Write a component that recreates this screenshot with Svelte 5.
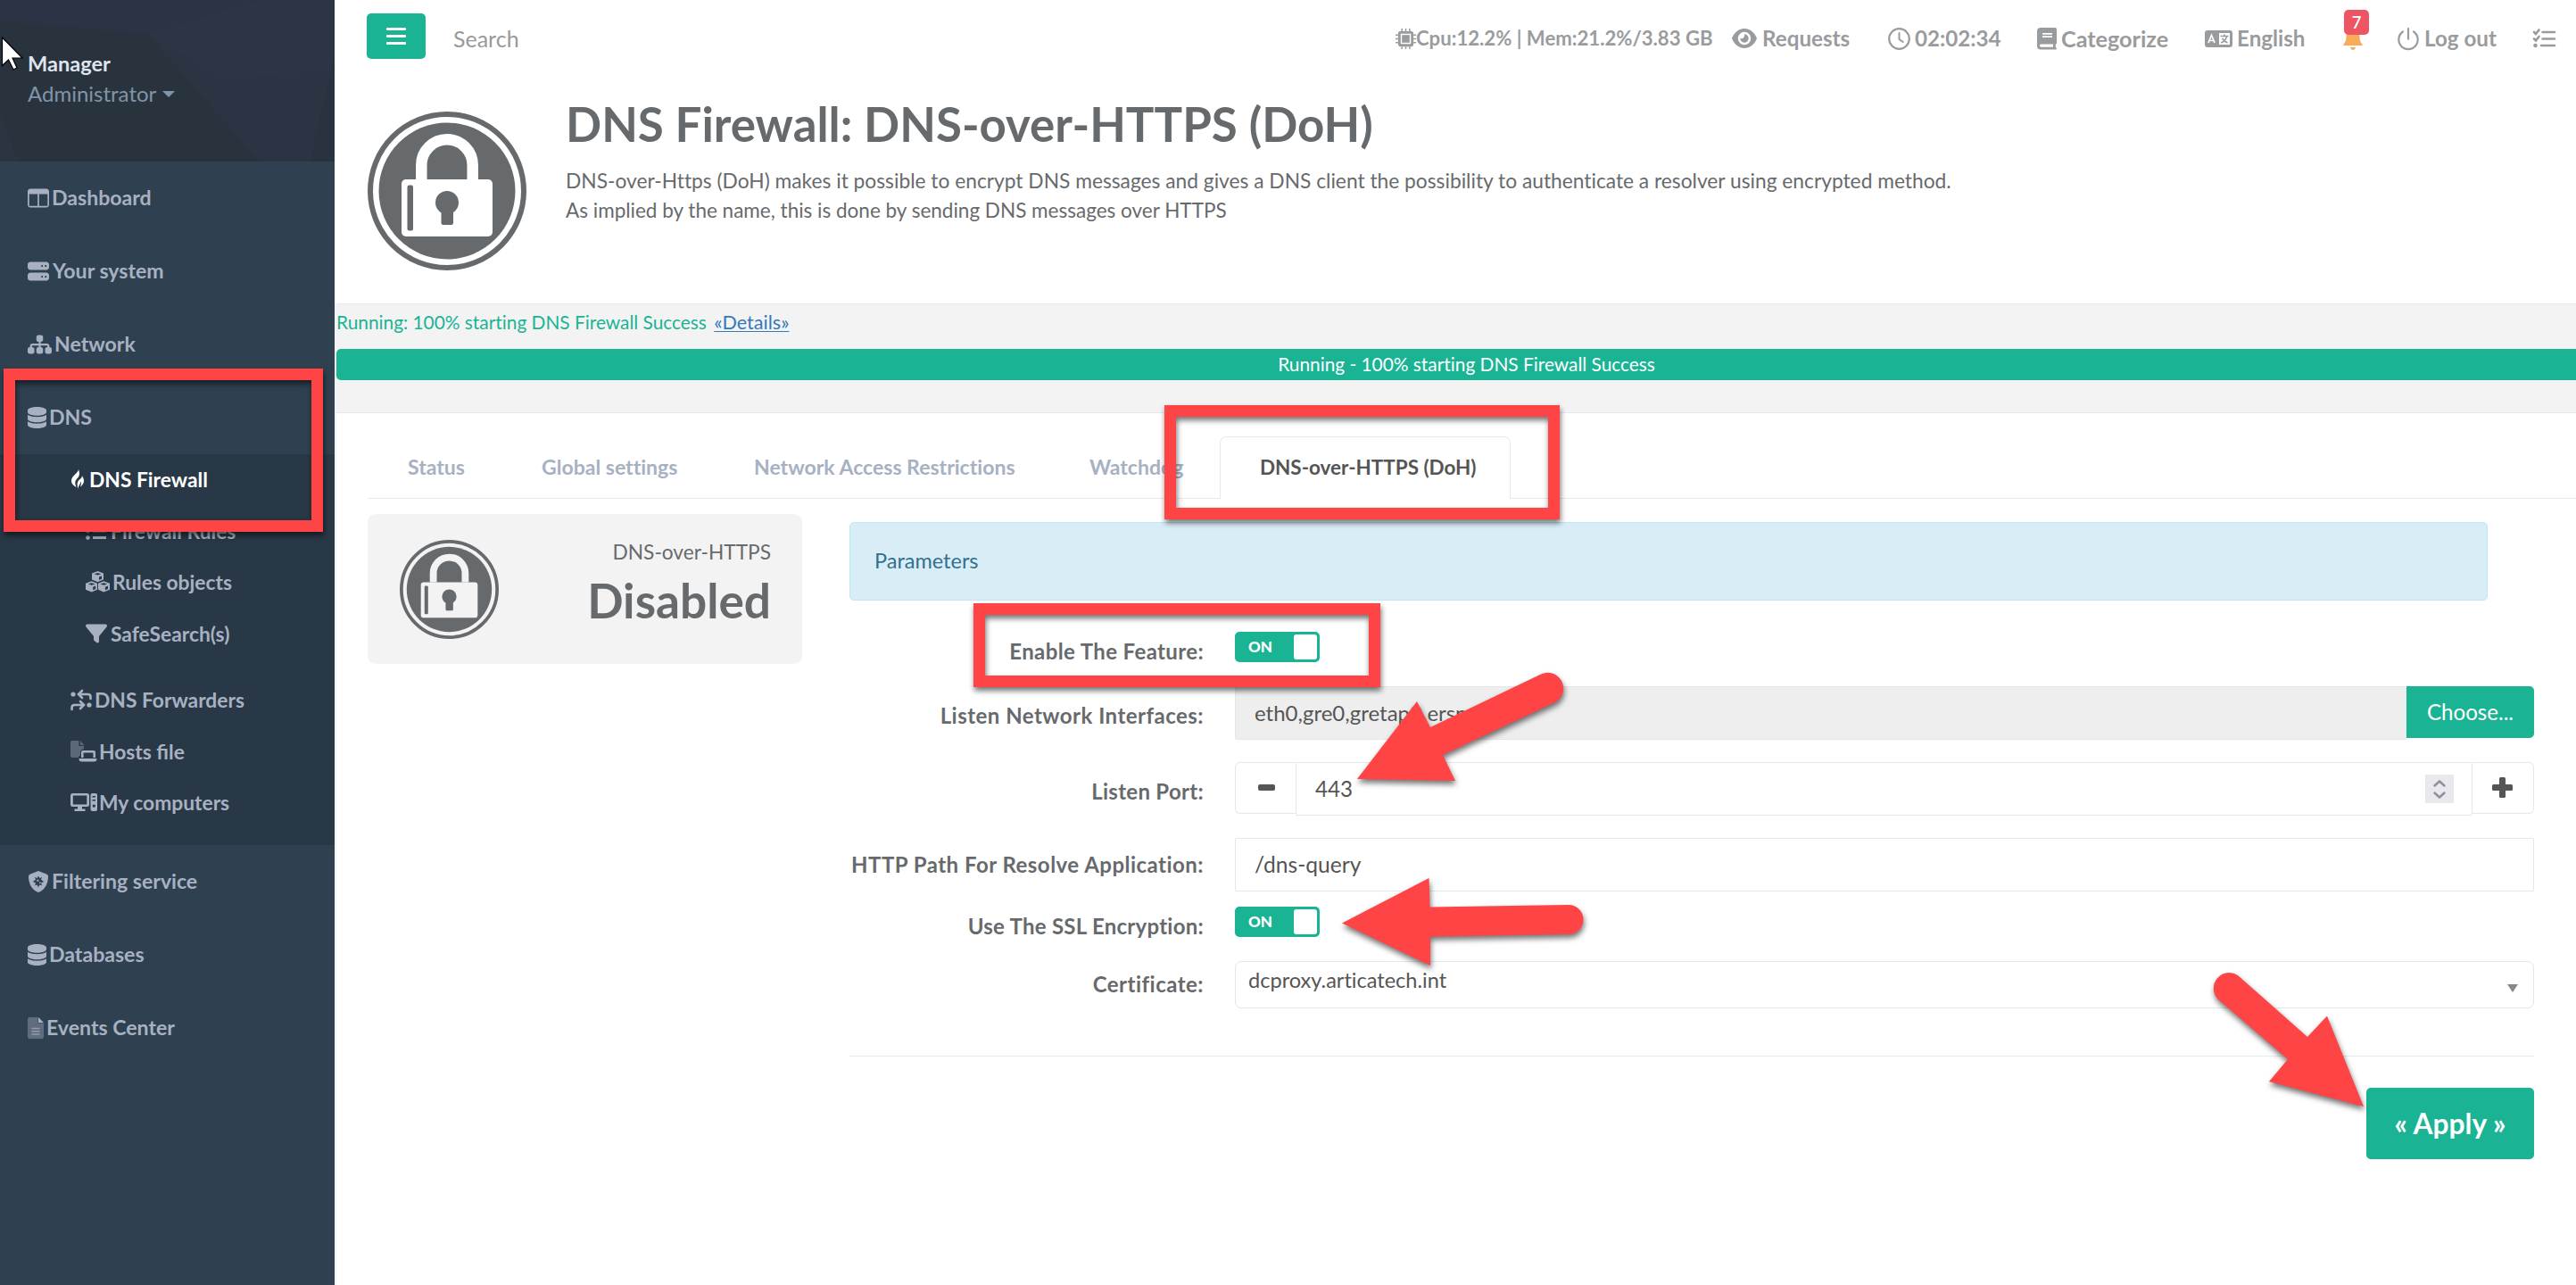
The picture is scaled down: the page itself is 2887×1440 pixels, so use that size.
<script>
  const top = [
    { icon: 'columns', label: 'Dashboard', w: 24, gap: 3 },
    { icon: 'server', label: 'Your system', w: 24, gap: 4 },
    { icon: 'sitemap', label: 'Network', w: 27, gap: 3 },
    { icon: 'database', label: 'DNS', w: 21, gap: 3 }
  ];
  const firewall = [
    { icon: 'list', label: 'Firewall Rules', w: 24, gap: 4 },
    { icon: 'cubes', label: 'Rules objects', w: 27, gap: 3 },
    { icon: 'filter', label: 'SafeSearch(s)', w: 24, gap: 4 }
  ];
  const dns = [
    { icon: 'swap', label: 'DNS Forwarders', w: 24, gap: 3 },
    { icon: 'hosts', label: 'Hosts file', w: 30, gap: 2, liga: true },
    { icon: 'computer', label: 'My computers', w: 30, gap: 2 }
  ];
  const bottom = [
    { icon: 'shield', label: 'Filtering service', w: 24, gap: 3 },
    { icon: 'database', label: 'Databases', w: 21, gap: 3 },
    { icon: 'file', label: 'Events Center', w: 18, gap: 3 }
  ];
  const tabs = ['Status', 'Global settings', 'Network Access Restrictions', 'Watchdog', 'DNS-over-HTTPS (DoH)'];
  const active = 4;
</script>

{#snippet icon(name)}
  {#if name === 'columns'}
    <svg viewBox="0 0 512 512" height="24"><path d="M0 96C0 60.7 28.7 32 64 32H448c35.3 0 64 28.7 64 64V416c0 35.3-28.7 64-64 64H64c-35.3 0-64-28.7-64-64V96zm36 64V436a16 16 0 0 0 16 8H238V160H36zm440 0H274V444H460a16 16 0 0 0 16-8V160z" /></svg>
  {:else if name === 'server'}
    <svg viewBox="0 0 512 512" height="24"><path fill-rule="evenodd" d="M64 32C28.7 32 0 60.7 0 96v64c0 35.3 28.7 64 64 64H448c35.3 0 64-28.7 64-64V96c0-35.3-28.7-64-64-64H64zm280 72a24 24 0 1 1 0 48 24 24 0 1 1 0-48zm64 24a24 24 0 1 1 48 0 24 24 0 1 1 -48 0zM64 288c-35.3 0-64 28.7-64 64v64c0 35.3 28.7 64 64 64H448c35.3 0 64-28.7 64-64V352c0-35.3-28.7-64-64-64H64zm280 72a24 24 0 1 1 0 48 24 24 0 1 1 0-48zm64 24a24 24 0 1 1 48 0 24 24 0 1 1 -48 0z" /></svg>
  {:else if name === 'sitemap'}
    <svg viewBox="0 0 576 512" height="24"><path d="M208 80c0-26.5 21.5-48 48-48h64c26.5 0 48 21.5 48 48v64c0 26.5-21.5 48-48 48h-8v40H464c30.9 0 56 25.1 56 56v32h8c26.5 0 48 21.5 48 48v64c0 26.5-21.5 48-48 48H464c-26.5 0-48-21.5-48-48V368c0-26.5 21.5-48 48-48h8V288c0-4.4-3.6-8-8-8H312v40h8c26.5 0 48 21.5 48 48v64c0 26.5-21.5 48-48 48H256c-26.5 0-48-21.5-48-48V368c0-26.5 21.5-48 48-48h8V280H112c-4.4 0-8 3.6-8 8v32h8c26.5 0 48 21.5 48 48v64c0 26.5-21.5 48-48 48H48c-26.5 0-48-21.5-48-48V368c0-26.5 21.5-48 48-48h8V288c0-30.9 25.1-56 56-56H264V192h-8c-26.5 0-48-21.5-48-48V80z" /></svg>
  {:else if name === 'database'}
    <svg viewBox="0 0 448 512" height="24"><path d="M448 80v48c0 44.2-100.3 80-224 80S0 172.2 0 128V80C0 35.8 100.3 0 224 0S448 35.8 448 80zM393.2 214.7c20.8-7.4 39.9-16.9 54.8-28.6V288c0 44.2-100.3 80-224 80S0 332.2 0 288V186.1c14.9 11.8 34 21.2 54.8 28.6C99.7 230.7 159.5 240 224 240s124.3-9.3 169.2-25.3zM0 346.1c14.9 11.8 34 21.2 54.8 28.6C99.7 390.7 159.5 400 224 400s124.3-9.3 169.2-25.3c20.8-7.4 39.9-16.9 54.8-28.6V432c0 44.2-100.3 80-224 80S0 476.2 0 432V346.1z" /></svg>
  {:else if name === 'flame'}
    <svg viewBox="0 0 14 22" height="22"><path d="M8 0C8 4 0 7 0 12.4 0 16.500 3 18.500 5.600 20 3.300 15 4.200 12 7.400 9.200 9.500 7 9.300 3 8 0z" /><path d="M12 7c.6 3-4.800 4.500-5.300 8.500-.2 2 .3 4.500.8 6.500.2-4 2.300-4.600 3-8.500 1 2 .2 4-.6 6C12.800 17.500 14 15.500 14 12.800 14 10.500 13 9 12 7z" /></svg>
  {:else if name === 'list'}
    <svg viewBox="0 0 24 24" height="24"><circle cx="2.500" cy="4.500" r="2.300" /><circle cx="2.500" cy="12" r="2.300" /><circle cx="2.500" cy="19.500" r="2.300" /><path d="M8 3h15v3H8zM8 10.500h15v3H8zM8 18h15v3H8z" /></svg>
  {:else if name === 'cubes'}
    <svg viewBox="0 0 27 24" height="24">
      <path d="M13.500 0l6.500 2.500v7l-6.500 2.700L7 9.500v-7zM6.700 11.200l6.300 2.500v7L6.700 23.500 0 20.700v-7zM20.300 11.200l6.700 2.500v7l-6.700 2.800-6.300-2.800v-7z" />
      <path class="cut" d="M9.600 3.300l3.900-1.300 3.900 1.300-3.900 1.300zM15 6.600l3-1.200v3.400L15 10zM2.800 14.500l3.900-1.300 3.900 1.300-3.900 1.300zM8.200 17.800l3-1.200v3.300l-3 1.300zM16.400 14.500l3.900-1.300 3.900 1.300-3.900 1.300zM21.900 17.800l3.100-1.200v3.300l-3.100 1.300z" />
    </svg>
  {:else if name === 'filter'}
    <svg viewBox="0 0 512 512" height="24"><path d="M3.900 54.900C10.500 40.900 24.500 32 40 32H472c15.500 0 29.500 8.900 36.100 22.900s4.600 30.500-5.200 42.500L320 320.900V448c0 12.100-6.800 23.200-17.700 28.600s-23.800 4.300-33.500-3l-64-48c-8.100-6-12.800-15.500-12.800-25.600V320.900L9 97.300C-.7 85.400-2.800 68.800 3.900 54.900z" /></svg>
  {:else if name === 'swap'}
    <svg viewBox="0 0 24 24" height="24"><circle cx="3" cy="6" r="2.600" /><circle cx="21" cy="18" r="2.600" /><path class="line" stroke-width="2.600" stroke-linecap="round" d="M22.500 11V9q0-3-3-3H9.500M13 2L9 6l4 4M1.500 23v-2q0-3 3-3H14M11 14l4 4-4 4" /></svg>
  {:else if name === 'hosts'}
    <svg viewBox="0 0 30 24" height="24"><path opacity=".4" d="M2 0h7.500v6H15v3.500q-4 0-4 4V16l-2.500 3H2q-2 0-2-2V2Q0 0 2 0zM11 0l4.500 5H11z" /><path d="M14 11h12q2 0 2 2v6h-2.500v-5.500h-11V19H12v-6q0-2 2-2zM9.500 20H29.500q0 3.500-3 3.500H12.500q-3 0-3-3.500z" /></svg>
  {:else if name === 'computer'}
    <svg viewBox="0 0 30 24" height="24"><path fill-rule="evenodd" d="M2.500 2h16Q21 2 21 4.500v10Q21 17 18.500 17H13v2.500h3.500v2.500h-12v-2.500H8V17H2.500Q0 17 0 14.500v-10Q0 2 2.500 2zM2.800 4.600v9.800h15.500V4.600zM24.500 2h3.500q2 0 2 2v16q0 2-2 2h-3.500q-2 0-2-2V4q0-2 2-2zM24.500 5v1.500H28V5zM24.500 9v1.500H28V9zM26.300 14.500a1.600 1.600 0 1 0 .01 0z" /></svg>
  {:else if name === 'shield'}
    <svg viewBox="0 0 24 24" height="24"><path fill-rule="evenodd" d="M12 0l9.500 3.800Q23 4.500 23 6c0 8-3.500 14.500-9.700 17.600q-1.300.6-2.600 0C4.500 20.500 1 14 1 6q0-1.500 1.500-2.200zM12 5.500L10.700 8 8 7 9 9.700 5.800 12 9 13.500 8 16.500l2.700-1L12 18.500l1.300-3 2.700 1-1-3 3.200-1.500L15 9.700 16 7l-2.700 1z" /><path d="M10.300 9.800h2v2h-2zM13 12.500h1.500V14H13z" /></svg>
  {:else if name === 'file'}
    <svg viewBox="0 0 18 24" height="24"><path opacity=".4" d="M2.300 0H11.500v6.500H18V21.700Q18 24 15.700 24H2.300Q0 24 0 21.700V2.300Q0 0 2.300 0z" /><path d="M12 0l6 6h-6z" /><path opacity=".7" d="M4.500 11.800h9v1.500h-9zM4.500 15h9v1.500h-9zM4.500 18.200h9v1.500h-9z" /></svg>
  {/if}
{/snippet}

{#snippet navItem(item)}
  <div class="item" class:liga={item.liga}>
    <span class="ico" style:width="{item.w}px" style:margin-right="{item.gap}px">{@render icon(item.icon)}</span>{item.label}
  </div>
{/snippet}

{#snippet padlock(size)}
  <svg viewBox="0 0 178 178" width={size} height={size}>
    <circle cx="89" cy="89" r="86" fill="none" stroke="#676a6c" stroke-width="6" />
    <circle cx="89" cy="89" r="76.500" fill="#676a6c" />
    <path d="M60.300 70V60a28.700 28.700 0 0 1 57.400 0v10" fill="none" class="shackle" stroke-width="12.500" stroke-linecap="square" />
    <rect class="body" x="38" y="76" width="102" height="64" rx="5" />
    <rect x="44.500" y="82.500" width="6.500" height="51" rx="2" fill="#676a6c" />
    <circle cx="89" cy="102" r="13" fill="#676a6c" />
    <rect x="82.500" y="104" width="13.500" height="23" rx="2.500" fill="#676a6c" />
  </svg>
{/snippet}

<div class="app">
  <aside>
    <div class="profile">
      <svg class="facets" viewBox="0 0 375 181" preserveAspectRatio="none">
        <rect width="375" height="181" fill="#2b3443" />
        <path d="M0 0H190L165 38 0 24z" fill="#2b3444" />
        <path d="M0 24L165 38 290 181H0z" fill="#29333e" />
        <path d="M165 38L290 0H375V80L250 88z" fill="#2c3545" />
        <path d="M0 120L20 181H0z" fill="#2b3541" />
        <path d="M375 60V181H348z" fill="#29323f" />
      </svg>
      <div class="who">
        <strong>Manager</strong>
        <span class="role">Administrator<i class="caret"></i></span>
      </div>
    </div>
    <nav>
      {#each top as item}<div class="row">{@render navItem(item)}</div>{/each}
      <div class="sub">
        <div class="subrow current">
          <span class="ico flame">{@render icon('flame')}</span>DNS Firewall
        </div>
        {#each firewall as item}<div class="subrow deep">{@render navItem(item)}</div>{/each}
        <div class="break"></div>
        {#each dns as item}<div class="subrow">{@render navItem(item)}</div>{/each}
      </div>
      {#each bottom as item}<div class="row">{@render navItem(item)}</div>{/each}
    </nav>
  </aside>

  <main>
    <header class="toolbar">
      <button class="burger" aria-label="Toggle menu"><i></i><i></i><i></i></button>
      <span class="search">Search</span>
      <div class="tools">
        <span class="cpu">
          <svg viewBox="0 0 24 24" width="23" height="23"><path fill-rule="evenodd" d="M6 3h12q3 0 3 3v12q0 3-3 3H6q-3 0-3-3V6q0-3 3-3zM6 6v12h12V6z" /><path d="M7.500 7.500h9v9h-9z" /><path class="line" stroke-width="1.600" d="M7.500 0v3M7.500 21v3M12 0v3M12 21v3M16.500 0v3M16.500 21v3M0 7.500h3M0 12h3M0 16.500h3M21 7.500h3M21 12h3M21 16.500h3" /></svg>Cpu:12.2% | Mem:21.2%/3.83 GB
        </span>
        <span>
          <svg class="g7" viewBox="0 0 28 22" width="28" height="22"><path fill-rule="evenodd" d="M14 0C21 0 26 5.500 28 11 26 16.500 21 22 14 22S2 16.500 0 11C2 5.500 7 0 14 0zM14 3.800a7.200 7.200 0 1 0 .01 0z" /><path d="M14 6.300a4.700 4.700 0 1 1-4.700 4.500 3.500 3.500 0 0 0 4.700-4.500z" /></svg>Requests
        </span>
        <span>
          <svg class="g5" viewBox="0 0 25 25" width="25" height="25"><circle class="line" cx="12.500" cy="12.500" r="11.300" stroke-width="2.200" /><path class="line" stroke-width="2" stroke-linecap="round" d="M12.500 6v7l4.300 3" /></svg>02:02:34
        </span>
        <span class="wide">
          <svg class="g5" viewBox="0 0 22 25" width="22" height="25"><path fill-rule="evenodd" d="M4 0h16q2 0 2 2v15q0 1.200-1.200 1.700v3.500q1.200.3 1.200 1.400 0 1-1.200 1H4q-4 0-4-4V4q0-4 4-4zM6 6v1.700h11V6zM6 9.300V11h11V9.300zM4.500 18.500q-1.600 0-1.600 1.600t1.600 1.700H18v-3.300z" /></svg>Categorize
        </span>
        <span>
          <svg class="g5" viewBox="0 0 31 19" width="31" height="19"><path fill-rule="evenodd" d="M3 0h25q3 0 3 3v13q0 3-3 3H3q-3 0-3-3V3q0-3 3-3zM16 3v13h12V3z" /><path d="M4 14l3.500-8.500L11 14M5.300 11.500h4.400" fill="none" stroke="#fff" stroke-width="1.700" /><path class="line" stroke-width="1.500" d="M17.500 6.500h9M22 4.500v2M24.500 7c-1 3.500-3 6-6.500 7M19.500 9c1.500 2.500 3.500 4 6 5" /></svg>English
        </span>
        <span class="bell">
          <svg viewBox="0 0 22 25" width="22" height="25"><path d="M9.500 0h3v2.500C17 3.300 18.500 7 18.500 10c0 5 1.500 7 3.200 8.800Q22 20 20.500 20h-19Q0 20 .3 18.800C2 17 3.500 15 3.500 10c0-3 1.500-6.700 6-7.500zM8 22h6q-.5 3-3 3T8 22z" /></svg>
          <b>7</b>
        </span>
        <span>
          <svg class="g7" viewBox="0 0 24 25" width="24" height="25"><path class="line" stroke-width="2.200" stroke-linecap="round" d="M12 1.200v11.500M6 4.500a10.700 10.700 0 1 0 12 0" /></svg>Log out
        </span>
        <span>
          <svg viewBox="0 0 25 22" width="25" height="22"><path class="line" stroke-width="2.600" stroke-linecap="round" d="M1 4l2 2 3.500-4.500M1 11.500l2 2L6.500 9M10.500 4H24M10.500 11.500H24M9 19H24" /><circle cx="2.500" cy="19" r="2.300" /></svg>
        </span>
      </div>
    </header>

    <section class="heading">
      {@render padlock(178)}
      <div>
        <h1>DNS Firewall: DNS-over-HTTPS (DoH)</h1>
        <p>DNS-over-Https (DoH) makes it possible to encrypt DNS messages and gives a DNS client the possibility to authenticate a resolver using encrypted method.</p>
        <p class="second">As implied by the name, this is done by sending DNS messages over HTTPS</p>
      </div>
    </section>

    <section class="progress">
      <div class="status">Running: 100% starting DNS Firewall Success <u>«Details»</u></div>
      <div class="bar">Running - 100% starting DNS Firewall Success</div>
    </section>

    <section class="content">
      <div class="tabs">
        {#each tabs as tab, i}<div class="tab" class:active={i === active}>{tab}</div>{/each}
      </div>
      <div class="pane">
        <div class="card">
          {@render padlock(111)}
          <div class="state">
            <span>DNS-over-HTTPS</span>
            <strong>Disabled</strong>
          </div>
        </div>
        <div class="form">
          <div class="alert">Parameters</div>
          <div class="field f1">
            <div class="label">Enable The Feature:</div>
            <div class="toggle">ON<i></i></div>
          </div>
          <div class="field f2">
            <div class="label">Listen Network Interfaces:</div>
            <div class="group">
              <div class="input readonly">eth0,gre0,gretap0,erspan0</div>
              <div class="choose">Choose...</div>
            </div>
          </div>
          <div class="field f3">
            <div class="label">Listen Port:</div>
            <div class="group">
              <div class="step minus"><svg viewBox="0 0 19 7" width="19" height="7"><rect width="19" height="7" rx="2" /></svg></div>
              <div class="input port">443
                <span class="spin"><svg viewBox="0 0 14 21" width="14" height="21"><path d="M1.500 6.500L7 1.500l5.500 5M1.500 14.500l5.500 5 5.500-5" /></svg></span>
              </div>
              <div class="step plus"><svg viewBox="0 0 23 23" width="23" height="23"><rect y="8" width="23" height="7" rx="1.500" /><rect x="8" width="7" height="23" rx="1.500" /></svg></div>
            </div>
          </div>
          <div class="field f4">
            <div class="label">HTTP Path For Resolve Application:</div>
            <div class="input">/dns-query</div>
          </div>
          <div class="field f5">
            <div class="label">Use The SSL Encryption:</div>
            <div class="toggle">ON<i></i></div>
          </div>
          <div class="field f6">
            <div class="label">Certificate:</div>
            <div class="select">dcproxy.articatech.int<i></i></div>
          </div>
          <hr />
          <button class="apply">« Apply »</button>
        </div>
      </div>
    </section>
  </main>

  <!-- Call-outs drawn over the page -->
  <svg class="marks" viewBox="0 0 2887 1440" width="2887" height="1440">
    <g class="frames">
      <rect x="10.500" y="419.500" width="345" height="170" />
      <rect x="1311.500" y="460.500" width="430" height="115" />
      <rect x="1097.500" y="682.500" width="443" height="81" />
    </g>
    <g class="arrows">
      <path d="M1521 873L1588 786 1603 815 1726 756A17.500 17.500 0 0 1 1743 787L1617 846 1631 875z" />
      <path d="M1504 1034.500L1601.500 984 1602.500 1016.500 1758 1014A16.500 16.500 0 0 1 1758 1047L1603 1049.500 1603 1082z" />
      <path d="M2649 1240L2543 1212 2564 1187 2486 1120A17.500 17.500 0 0 1 2508 1093L2586 1162 2608 1138.500z" />
    </g>
    <path class="pointer" d="M2.500 42V73.500L9.500 67 15 78 19 76 14 65H25z" />
  </svg>
</div>

<style>
  :global(body) { background: #fff; }
  .app { position: relative; display: grid; grid-template-columns: 375px 1fr; width: 2887px; height: 1440px; overflow: hidden; font-family: Lato, "Liberation Sans", sans-serif; font-size: 24px; color: #676a6c; font-variant-ligatures: no-common-ligatures; }
  svg { display: block; fill: currentColor; flex: none; overflow: visible; }
  .line { fill: none; stroke: currentColor; }
  button { border: 0; font: inherit; color: #fff; background: #1ab394; }

  aside { background: #2f4050; color: #a7b1c2; height: 1440px; }
  .profile { position: relative; height: 181px; }
  .facets { position: absolute; inset: 0; width: 375px; height: 181px; }
  .who { position: relative; display: flex; flex-direction: column; padding: 55px 0 0 31px; line-height: 33px; }
  .who strong { color: #dfe4ed; font-size: 23.600px; font-weight: 700; }
  .role { display: flex; align-items: center; color: #8095a8; font-size: 24px; }
  .caret { margin: 2px 0 0 7px; border: 7px solid transparent; border-top-color: currentColor; border-bottom: 0; }
  .row { box-sizing: border-box; display: flex; align-items: center; height: 82px; padding: 0 0 2px 31px; font-size: 23.100px; }
  .item { display: flex; align-items: center; font-weight: 700; white-space: nowrap; }
  .liga { font-variant-ligatures: common-ligatures; }
  .ico { display: flex; }
  .row .ico { padding-top: 2px; }
  .sub { box-sizing: border-box; height: 438px; background: #293846; font-size: 22.800px; }
  .subrow { box-sizing: border-box; display: flex; align-items: center; height: 57.5px; padding: 0 0 1px 79px; font-weight: 700; }
  .subrow.deep { padding-left: 96px; }
  .current { color: #fff; }
  .flame { margin: 0 6px 0 1px; }
  .break { height: 17px; }
  .cut { fill: #293846; }

  main { min-width: 0; }
  .toolbar { display: flex; height: 96px; padding-left: 36px; }
  .burger { display: flex; flex-direction: column; align-items: center; gap: 5px; box-sizing: border-box; width: 66px; height: 51px; margin-top: 15px; padding: 16px 0 0; border-radius: 5px; }
  .burger i { width: 22px; height: 3px; border-radius: 1px; background: #fff; }
  .search { margin: 28px 0 0 31px; width: 1056px; line-height: 30px; font-size: 25px; color: #999; }
  .tools { display: grid; grid-template-columns: 377px 175px 167px 188px 155px 61px 152px 40px; height: 30px; margin-top: 28px; color: #999c9e; font-size: 24.200px; font-weight: 700; white-space: nowrap; }
  .tools > span { display: flex; align-items: center; line-height: 30px; }
  .tools .cpu { font-size: 22.150px; }
  .tools .wide { font-size: 25.200px; }
  .g5 { margin-right: 5px; }
  .g7 { margin-right: 6px; }
  .tools .bell { position: relative; color: #f8ac59; }
  .bell b { position: absolute; left: 1px; top: -17px; width: 28px; height: 28px; border-radius: 5px; background: #ed5565; color: #fff; font-size: 18.500px; font-weight: 600; line-height: 29px; text-align: center; }

  .heading { box-sizing: border-box; display: flex; gap: 44px; height: 245px; margin-left: 2px; padding: 29px 0 0 35px; border-bottom: 1px solid #e7eaec; }
  .body { fill: #fff; }
  .shackle { stroke: #fff; }
  h1 { margin: -18px 0 0; font-size: 52.800px; font-weight: 700; line-height: 64px; white-space: nowrap; }
  p { margin: 15px 0 0; font-size: 22.750px; line-height: 33px; white-space: nowrap; }
  p.second { margin-top: 0; font-size: 22.500px; }

  .progress { box-sizing: border-box; height: 122px; padding: 8px 0 0 2px; background: #f3f3f4; border-bottom: 1px solid #e7eaec; }
  .status { height: 42px; line-height: 24px; font-size: 20.850px; color: #1ab394; }
  .status u { margin-left: 3px; font-size: 21.600px; color: #337ab7; text-underline-offset: 2px; text-decoration-thickness: 1px; }
  .bar { height: 35px; padding-left: 23px; border-radius: 5px 0 0 5px; background: #1ab394; color: #fff; font-size: 20.850px; line-height: 34px; text-align: center; }

  .content { height: 977px; border-left: 2px solid #f3f3f4; padding: 26px 0 0 35px; }
  .tabs { display: grid; grid-template-columns: 150px 238px 376px 191px 326px; height: 69px; border-bottom: 1px solid #e7eaec; color: #a7b1c2; font-size: 23.050px; font-weight: 700; line-height: 68px; }
  .tab { padding-left: 45px; white-space: nowrap; }
  .tab.active { box-sizing: border-box; height: 70px; padding-left: 44px; border: 1px solid #e7eaec; border-bottom: 0; border-radius: 7px 7px 0 0; background: #fff; color: #555; font-size: 22.450px; }
  .pane { display: flex; gap: 53px; padding: 17px 47px 0 0; }
  .card { box-sizing: border-box; display: flex; justify-content: space-between; width: 487px; height: 168px; padding: 29px 35px 0 36px; border-radius: 9px; background: #f3f3f4; }
  .card .body { fill: #f3f3f4; }
  .card .shackle { stroke: #f3f3f4; }
  .state { display: flex; flex-direction: column; align-items: flex-end; }
  .state span { font-size: 22.700px; line-height: 28px; }
  .state strong { margin-top: 7px; font-size: 53.200px; font-weight: 700; line-height: 64px; }

  .form { flex: 1; padding-top: 9px; }
  .alert { box-sizing: border-box; width: 1836px; height: 88px; padding-left: 27px; border: 1px solid #bce8f1; border-radius: 5px; background: #d9edf7; color: #31708f; font-size: 23.500px; line-height: 84px; }
  .field { display: grid; grid-template-columns: 397px 1fr; column-gap: 35px; color: #555; }
  .label { text-align: right; line-height: 30px; font-weight: 700; letter-spacing: .48px; color: #676a6c; white-space: nowrap; }
  .f1 { height: 61px; margin-top: 35px; }
  .f1 .label { padding-top: 7px; letter-spacing: .38px; }
  .f2 { height: 85px; }
  .f2 .label, .f3 .label { padding-top: 18px; }
  .f3 { height: 85px; }
  .f3 .label { letter-spacing: .3px; }
  .f4 { height: 77px; }
  .f4 .label { padding-top: 15px; }
  .f5 { height: 61px; }
  .f5 .label { padding-top: 7px; letter-spacing: .26px; }
  .f6 { height: 53px; }
  .f6 .label { padding-top: 11px; }
  .toggle { box-sizing: border-box; display: flex; justify-content: space-between; width: 95px; height: 34px; padding: 3px 3px 0 15px; border-radius: 5px; background: #1ab394; color: #fff; font-size: 17px; font-weight: 900; line-height: 27px; }
  .toggle i { width: 26px; height: 28px; border-radius: 3px; background: #fff; }
  .group { display: flex; }
  .input { box-sizing: border-box; flex: 1; height: 60px; padding-left: 21px; border: 1px solid #e5e6e7; border-radius: 2px; line-height: 58px; font-size: 24.600px; }
  .f2 .input { font-size: 24px; line-height: 57px; }
  .readonly { background: #eee; }
  .choose { width: 143px; height: 58px; border-radius: 0 5px 5px 0; background: #1ab394; color: #fff; line-height: 57px; text-align: center; font-size: 24.100px; }
  .step { box-sizing: border-box; display: flex; align-items: center; justify-content: center; height: 58px; border: 1px solid #e5e6e7; }
  .minus { width: 68px; border-right: 0; border-radius: 6px 0 0 6px; padding: 0 0 0 2px; }
  .minus svg { margin-top: -1px; }
  .plus { width: 69px; border-left: 0; border-radius: 0 6px 6px 0; }
  .plus svg { margin: 0 0 1px -2px; }
  .port { display: flex; justify-content: space-between; font-size: 24.200px; }
  .spin { display: flex; align-items: center; justify-content: center; width: 32px; height: 32px; margin: 13px 20px 0 0; background: #e9e9ed; }
  .spin path { fill: none; stroke: #8f8f9d; stroke-width: 2.500; stroke-linecap: round; stroke-linejoin: round; }
  .select { box-sizing: border-box; display: flex; justify-content: space-between; height: 53px; padding: 0 17px 0 14px; border: 1px solid #e5e6e7; border-radius: 7px; font-size: 23.550px; line-height: 41px; }
  .select i { align-self: flex-start; margin-top: 25px; border: 6px solid transparent; border-top: 9px solid #888; border-bottom: 0; }
  hr { margin: 53px 0 35px; border: 0; border-top: 1px solid #e7eaec; }
  .apply { display: block; width: 188px; height: 80px; margin-left: auto; border-radius: 5px; font-size: 31.700px; font-weight: 700; line-height: 78px; padding: 0; }

  .marks { position: absolute; left: 0; top: 0; pointer-events: none; }
  .frames { fill: none; stroke: #fe4444; stroke-width: 13; filter: drop-shadow(1px 4px 3px rgba(0, 0, 0, .55)); }
  .arrows { fill: #fe4444; filter: drop-shadow(1px 4px 3px rgba(0, 0, 0, .55)); }
  .pointer { fill: #fff; stroke: #000; stroke-width: 1.200; }
</style>
